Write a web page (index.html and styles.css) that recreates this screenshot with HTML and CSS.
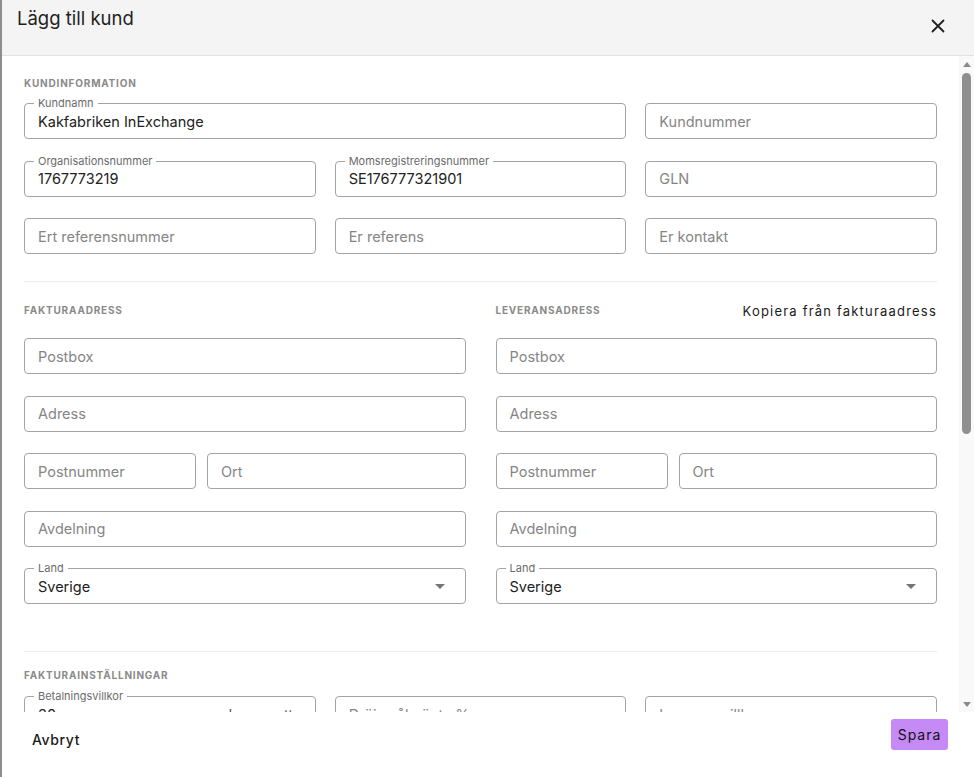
FILE: index.html
```html
<!DOCTYPE html>
<html lang="sv">

<head>
    <meta charset="UTF-8" />
    <title>Lägg till kund</title>
    <link rel="stylesheet" href="styles.css">
</head>

<body>
    <div class="page">
        <div class="backdrop"></div>
        <div class="dialog">
            <!-- rubrik -->
            <div class="dialog-head">
                <h2>Lägg till kund</h2>
                <button class="close" type="button">
                    <svg width="14" height="14" viewBox="0 0 14 14">
                        <path d="M1.5 1.5 L12.5 12.5 M12.5 1.5 L1.5 12.5" stroke="#1f1f1f" stroke-width="1.8" stroke-linecap="round" />
                    </svg>
                </button>
            </div>

            <div class="dialog-body">
                <div class="scroll">
                    <!-- kundinformation -->
                    <div class="section first">
                        <div class="section-title">Kundinformation</div>
                        <div class="grid-3">
                            <div class="field span-2">
                                <span class="label">Kundnamn</span>
                                <span class="value">Kakfabriken InExchange</span>
                            </div>
                            <div class="field"><span class="placeholder">Kundnummer</span></div>
                            <div class="field">
                                <span class="label">Organisationsnummer</span>
                                <span class="value">1767773219</span>
                            </div>
                            <div class="field">
                                <span class="label">Momsregistreringsnummer</span>
                                <span class="value">SE176777321901</span>
                            </div>
                            <div class="field"><span class="placeholder">GLN</span></div>
                            <div class="field"><span class="placeholder">Ert referensnummer</span></div>
                            <div class="field"><span class="placeholder">Er referens</span></div>
                            <div class="field"><span class="placeholder">Er kontakt</span></div>
                        </div>
                    </div>

                    <!-- adresser -->
                    <div class="section address">
                        <div class="columns">
                            <div class="column">
                                <div class="column-head">
                                    <div class="section-title">Fakturaadress</div>
                                </div>
                                <div class="stack">
                                    <div class="field"><span class="placeholder">Postbox</span></div>
                                    <div class="field"><span class="placeholder">Adress</span></div>
                                    <div class="split">
                                        <div class="field"><span class="placeholder">Postnummer</span></div>
                                        <div class="field"><span class="placeholder">Ort</span></div>
                                    </div>
                                    <div class="field"><span class="placeholder">Avdelning</span></div>
                                    <div class="field select">
                                        <span class="label">Land</span>
                                        <span class="value">Sverige</span>
                                        <span class="caret"></span>
                                    </div>
                                </div>
                            </div>
                            <div class="column">
                                <div class="column-head">
                                    <div class="section-title">Leveransadress</div>
                                    <a class="copy">Kopiera från fakturaadress</a>
                                </div>
                                <div class="stack">
                                    <div class="field"><span class="placeholder">Postbox</span></div>
                                    <div class="field"><span class="placeholder">Adress</span></div>
                                    <div class="split">
                                        <div class="field"><span class="placeholder">Postnummer</span></div>
                                        <div class="field"><span class="placeholder">Ort</span></div>
                                    </div>
                                    <div class="field"><span class="placeholder">Avdelning</span></div>
                                    <div class="field select">
                                        <span class="label">Land</span>
                                        <span class="value">Sverige</span>
                                        <span class="caret"></span>
                                    </div>
                                </div>
                            </div>
                        </div>
                    </div>

                    <!-- fakturainställningar -->
                    <div class="section last">
                        <div class="section-title">Fakturainställningar</div>
                        <div class="grid-3">
                            <div class="field">
                                <span class="label">Betalningsvillkor</span>
                                <span class="value">30</span>
                                <span class="suffix">dagar netto</span>
                            </div>
                            <div class="field"><span class="placeholder">Dröjsmålsränta %</span></div>
                            <div class="field"><span class="placeholder">Leveransvillkor</span></div>
                        </div>
                    </div>
                </div>

                <!-- rullist -->
                <div class="scrollbar">
                    <span class="arrow up"></span>
                    <div class="track">
                        <div class="thumb"></div>
                    </div>
                    <span class="arrow down"></span>
                </div>
            </div>

            <div class="dialog-foot">
                <button class="btn-text" type="button">Avbryt</button>
                <button class="btn-save" type="button">Spara</button>
            </div>
        </div>
    </div>
</body>

</html>
```

FILE: styles.css
```css
* {
    box-sizing: border-box;
}

body {
    margin: 0;
    padding: 0;
    font-family: Inter, "Noto Sans", sans-serif;
    color: #1f1f1f;
    background-color: #fff;
}

.page {
    display: flex;
    width: 974px;
    height: 777px;
    overflow: hidden;
}

.backdrop {
    width: 2px;
    background-color: #8d8d8d;
}

.dialog {
    flex: 1;
    display: flex;
    flex-direction: column;
    background-color: #fff;
}

.dialog-head {
    height: 56px;
    display: flex;
    align-items: flex-start;
    justify-content: space-between;
    background-color: #f4f4f4;
    border-bottom: 1px solid #e2e2e2;
}

.dialog-head h2 {
    margin: 7px 0 0 15px;
    font-size: 18.5px;
    font-weight: 400;
    line-height: 22px;
    color: #1f1f1f;
}

.close {
    margin: 19px 29px 0 0;
    padding: 0;
    width: 14px;
    height: 14px;
    border: none;
    background: none;
    display: block;
}

.close svg {
    display: block;
}

.dialog-body {
    height: 656px;
    display: flex;
    overflow: hidden;
}

.scroll {
    flex: 1;
    padding: 0 22px;
    overflow: hidden;
}

.section {
    border-bottom: 1px solid #ececec;
}

.section.first {
    padding: 20px 0 27px;
}

.section.address {
    padding: 21px 0 47px;
}

.section.last {
    padding: 16px 0 0;
    border-bottom: none;
}

.section-title {
    font-size: 10px;
    line-height: 14px;
    font-weight: 700;
    letter-spacing: 0.8px;
    text-transform: uppercase;
    color: #8a8a8a;
}

.section.first .section-title {
    margin-bottom: 13px;
}

.section.last .section-title {
    margin-bottom: 14px;
}

.grid-3 {
    display: grid;
    grid-template-columns: 1fr 1fr 1fr;
    column-gap: 19px;
    row-gap: 21.5px;
}

.span-2 {
    grid-column: span 2;
}

.columns {
    display: grid;
    grid-template-columns: 1fr 1fr;
    column-gap: 30px;
}

.column-head {
    height: 14px;
    margin-bottom: 21px;
    display: flex;
    align-items: center;
    justify-content: space-between;
}

.copy {
    font-size: 13px;
    letter-spacing: 1.2px;
    color: #1a1a1a;
    margin-top: 2px;
}

.stack {
    display: flex;
    flex-direction: column;
    gap: 21.5px;
}

.split {
    display: grid;
    grid-template-columns: 172px 1fr;
    column-gap: 11px;
}

/* inputfält */
.field {
    position: relative;
    height: 36px;
    padding: 0 13px;
    display: flex;
    align-items: center;
    border: 1px solid #a3a3a3;
    border-radius: 4px;
    font-size: 14.5px;
}

.field .label {
    position: absolute;
    top: -8px;
    left: 9px;
    padding: 0 4px;
    background-color: #fff;
    font-size: 11px;
    line-height: 14px;
    color: #6b6b6b;
}

.field .value {
    color: #222;
}

.field .placeholder {
    color: #858585;
}

.field .suffix {
    margin-left: auto;
    color: #555;
}

.select .caret {
    margin-left: auto;
    margin-right: 7px;
    width: 0;
    height: 0;
    border-left: 5px solid transparent;
    border-right: 5px solid transparent;
    border-top: 5px solid #757575;
}

.scrollbar {
    width: 15px;
    display: flex;
    flex-direction: column;
    align-items: center;
    background-color: #f9f9f9;
    padding: 6px 0 5px;
}

.arrow {
    width: 0;
    height: 0;
    border-left: 4px solid transparent;
    border-right: 4px solid transparent;
}

.arrow.up {
    border-bottom: 5px solid #8a8a8a;
}

.arrow.down {
    border-top: 5px solid #8a8a8a;
}

.track {
    flex: 1;
    width: 100%;
    padding: 6px 3px 0;
}

.thumb {
    width: 9px;
    height: 361px;
    margin: 0 auto;
    border-radius: 5px;
    background-color: #8f8f8f;
}

.dialog-foot {
    flex: 1;
    display: flex;
    align-items: flex-start;
    justify-content: space-between;
    padding: 7px 26px 0 22px;
}

.btn-text {
    padding: 12px 8px;
    border: none;
    background: none;
    font-family: Inter, "Noto Sans", sans-serif;
    font-size: 14px;
    line-height: 17px;
    font-weight: 500;
    letter-spacing: 0.6px;
    color: #1a1a1a;
}

.btn-save {
    width: 57px;
    height: 31px;
    padding: 0;
    border: none;
    border-radius: 3px;
    background-color: #c58af5;
    font-family: Inter, "Noto Sans", sans-serif;
    font-size: 14px;
    font-weight: 400;
    letter-spacing: 1px;
    color: #111;
}
```
